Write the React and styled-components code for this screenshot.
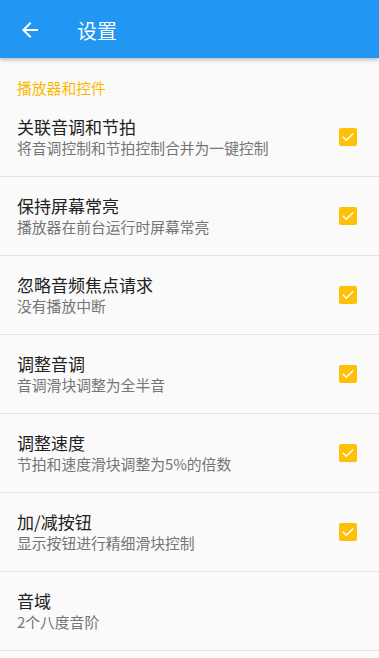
import styled, { createGlobalStyle } from "styled-components";

const GlobalStyle = createGlobalStyle`
  html, body {
    margin: 0;
    padding: 0;
    background: #fafafa;
    font-family: Roboto, "Noto Sans CJK SC", sans-serif;
  }
`;

const items = [
  { title: "关联音调和节拍", sub: "将音调控制和节拍控制合并为一键控制", checked: true },
  { title: "保持屏幕常亮", sub: "播放器在前台运行时屏幕常亮", checked: true },
  { title: "忽略音频焦点请求", sub: "没有播放中断", checked: true },
  { title: "调整音调", sub: "音调滑块调整为全半音", checked: true },
  { title: "调整速度", sub: "节拍和速度滑块调整为5%的倍数", checked: true },
  { title: "加/减按钮", sub: "显示按钮进行精细滑块控制", checked: true },
  { title: "音域", sub: "2个八度音阶" },
];

export default function App() {
  return (
    <Page>
      <GlobalStyle />
      <AppBar>
        <BackButton aria-label="back">
          <svg width="24" height="24" viewBox="0 0 24 24">
            <path
              d="M20 11H7.83l5.59-5.59L12 4l-8 8 8 8 1.41-1.41L7.83 13H20v-2z"
              fill="#fff"
            />
          </svg>
        </BackButton>
        <BarTitle>设置</BarTitle>
      </AppBar>

      <SectionLabel>播放器和控件</SectionLabel>

      {items.map((item) => (
        <Row key={item.title}>
          <RowText>
            <RowTitle>{item.title}</RowTitle>
            <RowSub>{item.sub}</RowSub>
          </RowText>
          {item.checked && (
            <CheckBox>
              <svg width="14" height="14" viewBox="0 0 24 24">
                <path
                  d="M4 12.5l5 5L20 7"
                  fill="none"
                  stroke="#fff"
                  strokeWidth="2.6"
                  strokeLinecap="square"
                />
              </svg>
            </CheckBox>
          )}
        </Row>
      ))}
    </Page>
  );
}

const Page = styled.div`
  width: 379px;
  min-height: 658px;
  background: #fafafa;
  overflow: hidden;
`;

const AppBar = styled.header`
  height: 58px;
  background: #2196f3;
  display: flex;
  align-items: center;
  box-shadow: 0 2px 4px rgba(0, 0, 0, 0.25);
  position: relative;
  z-index: 1;
`;

const BackButton = styled.div`
  width: 24px;
  height: 24px;
  margin: 2px 0 0 18px;
  display: flex;
  align-items: center;
  justify-content: center;
`;

const BarTitle = styled.h1`
  margin: 2px 0 0 35px;
  font-size: 20px;
  font-weight: 400;
  color: #fff;
  font-family: "Noto Sans CJK SC", sans-serif;
`;

const SectionLabel = styled.div`
  height: 40px;
  box-sizing: border-box;
  padding: 20px 0 0 17px;
  font-size: 14.8px;
  line-height: 20px;
  color: #fbb800;
  font-family: "Noto Sans CJK SC", sans-serif;
`;

const Row = styled.div`
  height: 79px;
  box-sizing: border-box;
  border-bottom: 1.5px solid #e2e2e2;
  display: flex;
  align-items: center;
  padding: 0 22px 1px 17px;
`;

const RowText = styled.div`
  flex: 1;
  display: flex;
  flex-direction: column;
  font-family: "Noto Sans CJK SC", sans-serif;
`;

const RowTitle = styled.div`
  font-size: 17px;
  line-height: 23px;
  color: #212121;
`;

const RowSub = styled.div`
  font-size: 14.8px;
  line-height: 20px;
  color: #757575;
`;

const CheckBox = styled.div`
  width: 18px;
  height: 18px;
  border-radius: 2px;
  background: #ffc107;
  display: flex;
  align-items: center;
  justify-content: center;
`;
